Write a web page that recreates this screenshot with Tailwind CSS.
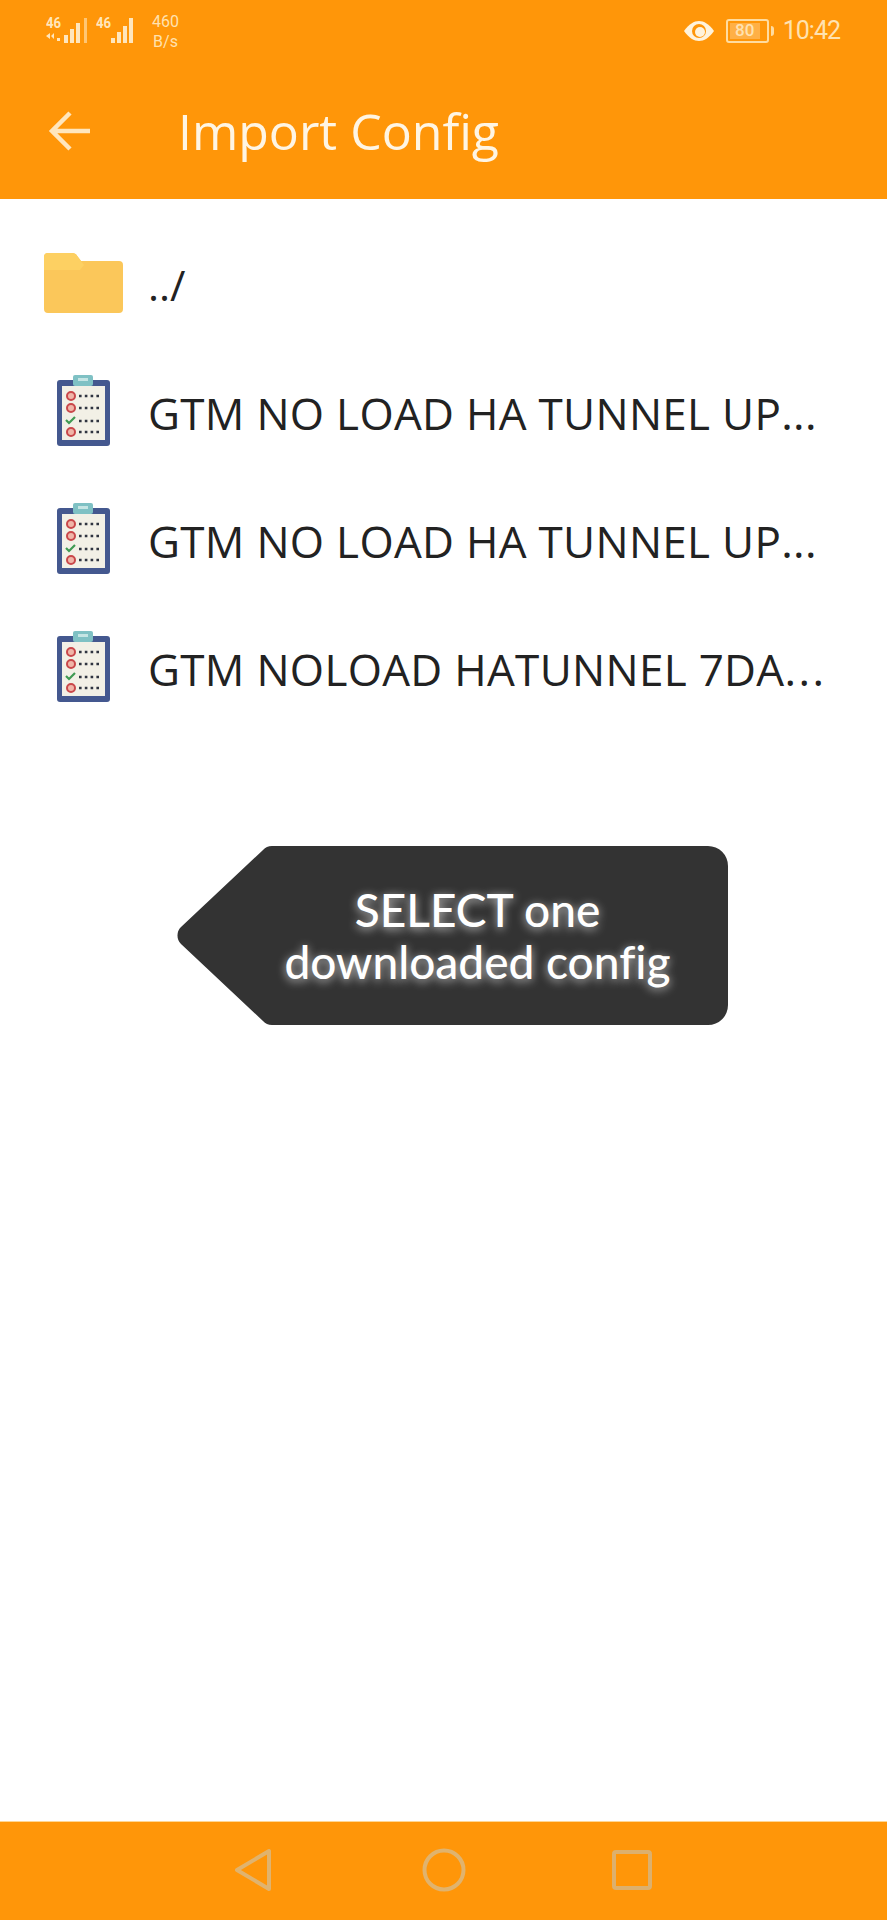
<!DOCTYPE html>
<html lang="en">
    <head>
        <meta charset="UTF-8" />
        <meta name="viewport" content="width=device-width, initial-scale=1.0" />
        <title>Import Config</title>
        <script src="https://cdn.jsdelivr.net/npm/@tailwindcss/browser@4"></script>
    </head>
    <body class="bg-white font-['Open_Sans',sans-serif]">
        <!-- shared icons -->
        <svg class="hidden" xmlns="http://www.w3.org/2000/svg">
            <symbol id="clipboard" viewBox="0 0 53 71">
                <rect x="0" y="5" width="53" height="66" rx="3" fill="#44588f" />
                <rect x="5" y="11" width="43" height="54" fill="#f2f0e6" />
                <rect x="16" y="0" width="20" height="11" rx="2" fill="#7fc1c4" />
                <rect x="21" y="3" width="10" height="3" fill="#c5e5e4" />
                <circle cx="14" cy="21" r="4" fill="#f0b5a8" stroke="#c9474a" stroke-width="2" />
                <circle cx="14" cy="33" r="4" fill="#f0b5a8" stroke="#c9474a" stroke-width="2" />
                <circle cx="14" cy="57" r="4" fill="#f0b5a8" stroke="#c9474a" stroke-width="2" />
                <path d="M9 45l3 3 6-6" fill="none" stroke="#3f9a52" stroke-width="2.2" />
                <path d="M22 21h22M22 33h22M22 46h22M22 57h22" stroke="#2f3440" stroke-width="2.4" stroke-dasharray="2.6 3.2" />
            </symbol>
        </svg>

        <div class="flex h-[1920px] flex-col">
            <header class="h-[199px] shrink-0 bg-[#ff9609]">
                <!-- status bar -->
                <div class="flex h-[64px] items-start justify-between pr-[47px] pl-[46px] pt-[12px] text-[#ffe2b0]">
                    <div class="flex items-start">
                        <svg class="mt-[3px]" width="42" height="30" viewBox="0 0 42 30" fill="#ffe6bd">
                            <text x="0" y="13" font-family="Roboto" font-weight="700" font-size="15" textLength="15" lengthAdjust="spacingAndGlyphs">46</text>
                            <path d="M0 21l4-3v6zM8 18v6l-3-3zM11 23h3v3h-3z" />
                            <rect x="18" y="20" width="4" height="8" />
                            <rect x="24" y="14" width="4" height="14" />
                            <rect x="30" y="8" width="4" height="20" />
                            <rect x="38" y="3" width="3" height="25" opacity=".6" />
                        </svg>
                        <svg class="ml-[8px] mt-[3px]" width="42" height="30" viewBox="0 0 42 30" fill="#ffe6bd">
                            <text x="0" y="13" font-family="Roboto" font-weight="700" font-size="15" textLength="15" lengthAdjust="spacingAndGlyphs">46</text>
                            <rect x="15" y="23" width="4" height="5" />
                            <rect x="21" y="17" width="4" height="11" />
                            <rect x="27" y="11" width="4" height="17" />
                            <rect x="33" y="3" width="4" height="25" />
                        </svg>
                        <div class="ml-[14px] flex flex-col items-center font-['Roboto',sans-serif] text-[16px] leading-[20px]">
                            <span>460</span>
                            <span>B/s</span>
                        </div>
                    </div>
                    <div class="flex items-center pt-[6px]">
                        <svg width="32" height="24" viewBox="0 0 32 24">
                            <path d="M1 12C6 5 11 2 16 2s10 3 15 10c-5 7-10 10-15 10S6 19 1 12z" fill="#fff3dc" />
                            <circle cx="16" cy="12" r="7" fill="#ff9609" />
                            <circle cx="17" cy="13" r="5" fill="#fff3dc" />
                        </svg>
                        <div class="ml-[11px] flex h-[24px] w-[43px] items-center rounded-[3px] border-2 border-[#ffdca0] p-[2px]">
                            <div class="flex h-full w-[30px] items-center justify-center bg-white/25 font-['Roboto',sans-serif] text-[17px] leading-none font-medium">80</div>
                        </div>
                        <div class="ml-[2px] h-[10px] w-[3px] rounded-r-sm bg-[#ffdca0]"></div>
                        <span class="ml-[9px] font-['Roboto',sans-serif] text-[25px] leading-none tracking-[-1px]">10:42</span>
                    </div>
                </div>
                <!-- title bar -->
                <div class="flex h-[134px] items-center">
                    <svg class="ml-[48px]" width="44" height="44" viewBox="0 0 44 44" fill="none" stroke="#ffe6bd" stroke-width="4.500">
                        <path d="M42 22H5M22 4L4 22l18 18" />
                    </svg>
                    <h1 class="ml-[86px] text-[50px] leading-none font-medium text-[#fff5e3]">Import Config</h1>
                </div>
            </header>

            <main class="relative flex-1 pt-[22px]">
                <ul class="text-[#222222]">
                    <li class="flex h-[128px] items-center">
                        <div class="w-[148px] shrink-0 pb-[4px] pl-[44px]">
                            <svg width="79" height="60" viewBox="0 0 79 60">
                                <path d="M0 4a4 4 0 0 1 4-4h24c3 0 4 1 6 4l3 4h38a4 4 0 0 1 4 4v44a4 4 0 0 1-4 4H4a4 4 0 0 1-4-4z" fill="#fbc75a" />
                                <path d="M0 4a4 4 0 0 1 4-4h24c3 0 4 1 6 4l6 8-4 5H0z" fill="#fdd062" />
                            </svg>
                        </div>
                        <span class="text-[42px] leading-none">../</span>
                    </li>
                    <li class="flex h-[128px] items-center">
                        <div class="flex w-[148px] shrink-0 pb-[6px] pl-[57px]">
                            <svg width="53" height="71"><use href="#clipboard" /></svg>
                        </div>
                        <span class="text-[44px] leading-none tracking-[0.3px] whitespace-nowrap">GTM NO LOAD HA TUNNEL UP...</span>
                    </li>
                    <li class="flex h-[128px] items-center">
                        <div class="flex w-[148px] shrink-0 pb-[6px] pl-[57px]">
                            <svg width="53" height="71"><use href="#clipboard" /></svg>
                        </div>
                        <span class="text-[44px] leading-none tracking-[0.3px] whitespace-nowrap">GTM NO LOAD HA TUNNEL UP...</span>
                    </li>
                    <li class="flex h-[128px] items-center">
                        <div class="flex w-[148px] shrink-0 pb-[6px] pl-[57px]">
                            <svg width="53" height="71"><use href="#clipboard" /></svg>
                        </div>
                        <span class="text-[44px] leading-none tracking-[0.3px] whitespace-nowrap">GTM NOLOAD HATUNNEL 7DA<span class="tracking-[2.500px]">...</span></span>
                    </li>
                </ul>

                <!-- hint bubble over the list -->
                <div class="absolute top-[647px] left-[177px] h-[179px] w-[551px]">
                    <svg class="absolute inset-0" width="551" height="179" viewBox="0 0 551 179">
                        <path d="M551 20v139a20 20 0 0 1-20 20H95a12 12 0 0 1-9-4L4 98a12 12 0 0 1 0-17L86 4a12 12 0 0 1 9-4h436a20 20 0 0 1 20 20z" fill="#333333" />
                    </svg>
                    <div class="absolute inset-y-0 right-[42px] left-[92px] flex flex-col items-center justify-center font-['Lato',sans-serif] text-[46px] leading-[52px] font-medium whitespace-nowrap text-white [font-variant-ligatures:none] [text-shadow:0_2px_10px_rgba(255,255,255,0.75)]">
                        <span>SELECT one</span>
                        <span>downloaded config</span>
                    </div>
                </div>
            </main>

            <!-- nav bar -->
            <footer class="flex h-[99px] shrink-0 items-center border-t border-[#ffd793] bg-[#ff9609] pb-[2px]">
                <svg class="ml-[234px]" width="38" height="44" viewBox="0 0 38 44" fill="none" stroke="#e0b36e" stroke-width="4" stroke-linejoin="round">
                    <path d="M35 3v38L3 22z" />
                </svg>
                <svg class="ml-[150px]" width="44" height="44" viewBox="0 0 44 44" fill="none" stroke="#e0b36e" stroke-width="4">
                    <circle cx="22" cy="22" r="19.500" />
                </svg>
                <svg class="ml-[146px]" width="40" height="40" viewBox="0 0 40 40" fill="none" stroke="#dcb06e" stroke-width="4">
                    <rect x="2" y="2" width="36" height="36" rx="2" />
                </svg>
            </footer>
        </div>
    </body>
</html>
